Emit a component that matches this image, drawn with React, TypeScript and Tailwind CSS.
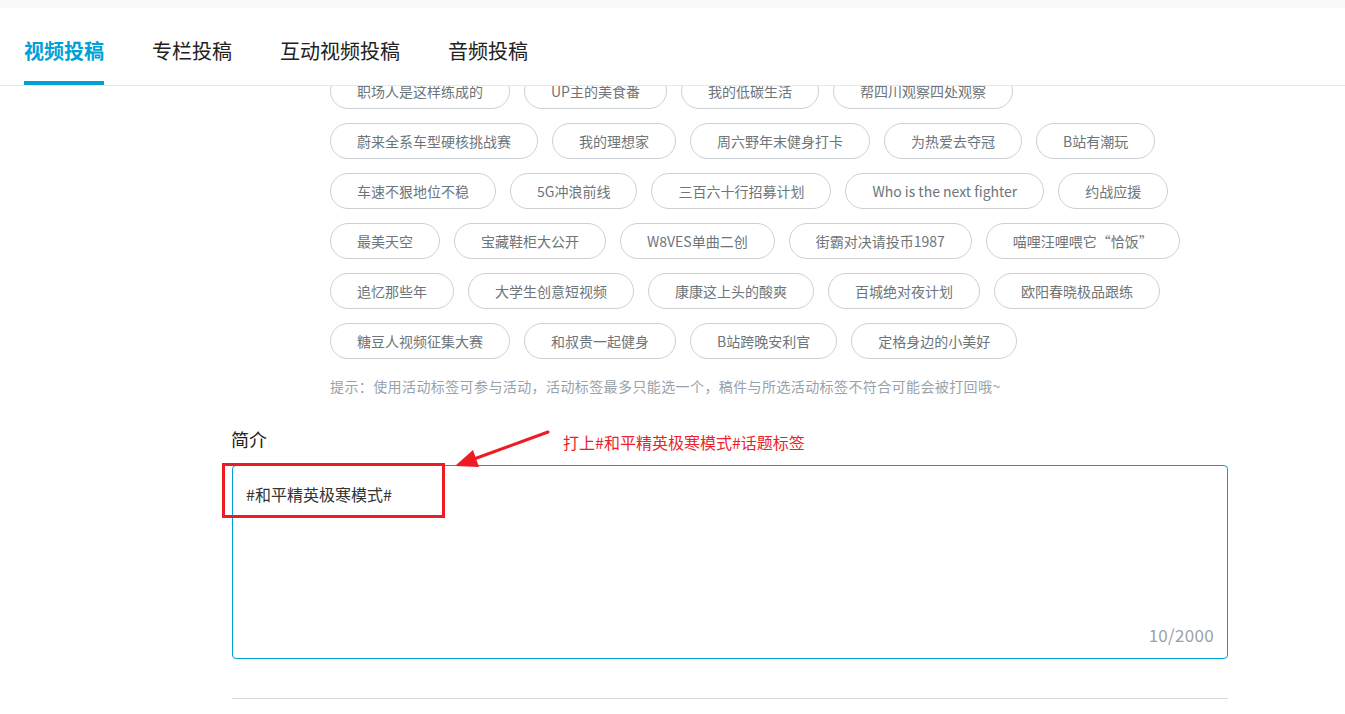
import React from 'react';

const tabs = ['视频投稿', '专栏投稿', '互动视频投稿', '音频投稿'];

const tagRows: string[][] = [
    ['职场人是这样练成的', 'UP主的美食番', '我的低碳生活', '帮四川观察四处观察'],
    ['蔚来全系车型硬核挑战赛', '我的理想家', '周六野年末健身打卡', '为热爱去夺冠', 'B站有潮玩'],
    ['车速不狠地位不稳', '5G冲浪前线', '三百六十行招募计划', 'Who is the next fighter', '约战应援'],
    ['最美天空', '宝藏鞋柜大公开', 'W8VES单曲二创', '街霸对决请投币1987', '喵哩汪哩喂它“恰饭”'],
    ['追忆那些年', '大学生创意短视频', '康康这上头的酸爽', '百城绝对夜计划', '欧阳春晓极品跟练'],
    ['糖豆人视频征集大赛', '和叔贵一起健身', 'B站跨晚安利官', '定格身边的小美好'],
];

const Tag: React.FC<{ label: string }> = ({ label }) => (
    <div className="h-[36px] flex items-center rounded-full border border-[#ccd0d7] px-[26px] text-[14px] text-[#6d757a] whitespace-nowrap bg-white">
        {label}
    </div>
);

export default function App() {
    return (
        <div
            className="w-[1345px] h-[714px] overflow-hidden bg-white text-[#212121]"
            style={{ fontFamily: '"Noto Sans CJK SC", "Noto Sans", sans-serif' }}
        >
            {/* top strip */}
            <div className="h-[8px] bg-[#f9f9f9]" />

            {/* tabs */}
            <div className="relative z-10 h-[78px] bg-white border-b border-[#e5e9ef] flex pl-[24px] gap-[48px]">
                {tabs.map((t, i) => (
                    <div key={t} className="relative h-[77px]">
                        <div
                            className={
                                i === 0
                                    ? 'pt-[29px] leading-[28px] text-[20px] font-bold text-[#00a1d6]'
                                    : 'pt-[29px] leading-[28px] text-[20px] text-[#212121]'
                            }
                        >
                            {t}
                        </div>
                        {i === 0 && <div className="absolute left-0 right-0 bottom-0 h-[4px] bg-[#00a1d6]" />}
                    </div>
                ))}
            </div>

            <div className="ml-[232px] w-[996px]">
                {/* activity tags, scrolled under the header */}
                <div className="pl-[98px] flex flex-col gap-[14px] mt-[-13px]">
                    {tagRows.map((row, r) => (
                        <div key={r} className="flex gap-[14px]">
                            {row.map(tag => (
                                <Tag key={tag} label={tag} />
                            ))}
                        </div>
                    ))}
                </div>

                <div className="pl-[98px] mt-[17px] text-[14px] leading-[20px] tracking-[0.4px] text-[#99a2aa] whitespace-nowrap">
                    提示：使用活动标签可参与活动，活动标签最多只能选一个，稿件与所选活动标签不符合可能会被打回哦~
                </div>

                {/* description */}
                <div className="relative mt-[31px]">
                    <div className="text-[18px] leading-[24px] text-[#212121] -ml-[1px]">简介</div>

                    <div className="mt-[14px] h-[194px] border border-[#00a1d6] rounded-[4px] flex flex-col justify-between px-[13px] pt-[16px] pb-[11px]">
                        <div className="text-[16px] leading-[24px] text-[#333333]">#和平精英极寒模式#</div>
                        <div className="self-end text-[17px] leading-[24px] tracking-[0.3px] text-[#99a2aa]">10/2000</div>
                    </div>

                    {/* annotation: red box */}
                    <div className="absolute left-[-10px] top-[36px] w-[223px] h-[55px] border-[3px] border-[#ed1c24]" />

                    {/* annotation: arrow */}
                    <svg className="absolute left-[218px] top-0" width="104" height="48" viewBox="0 0 104 48">
                        <line x1="98" y1="5" x2="24" y2="32" stroke="#ed1c24" strokeWidth="3" strokeLinecap="round" />
                        <polygon points="5,39 29,40 23,23" fill="#ed1c24" />
                    </svg>

                    {/* annotation: text */}
                    <div className="absolute left-[331px] top-[3px] text-[16px] leading-[24px] text-[#ee1f2d] whitespace-nowrap">
                        打上#和平精英极寒模式#话题标签
                    </div>
                </div>

                <div className="mt-[39px] h-px bg-[#d5d9de]" />
            </div>
        </div>
    );
}
